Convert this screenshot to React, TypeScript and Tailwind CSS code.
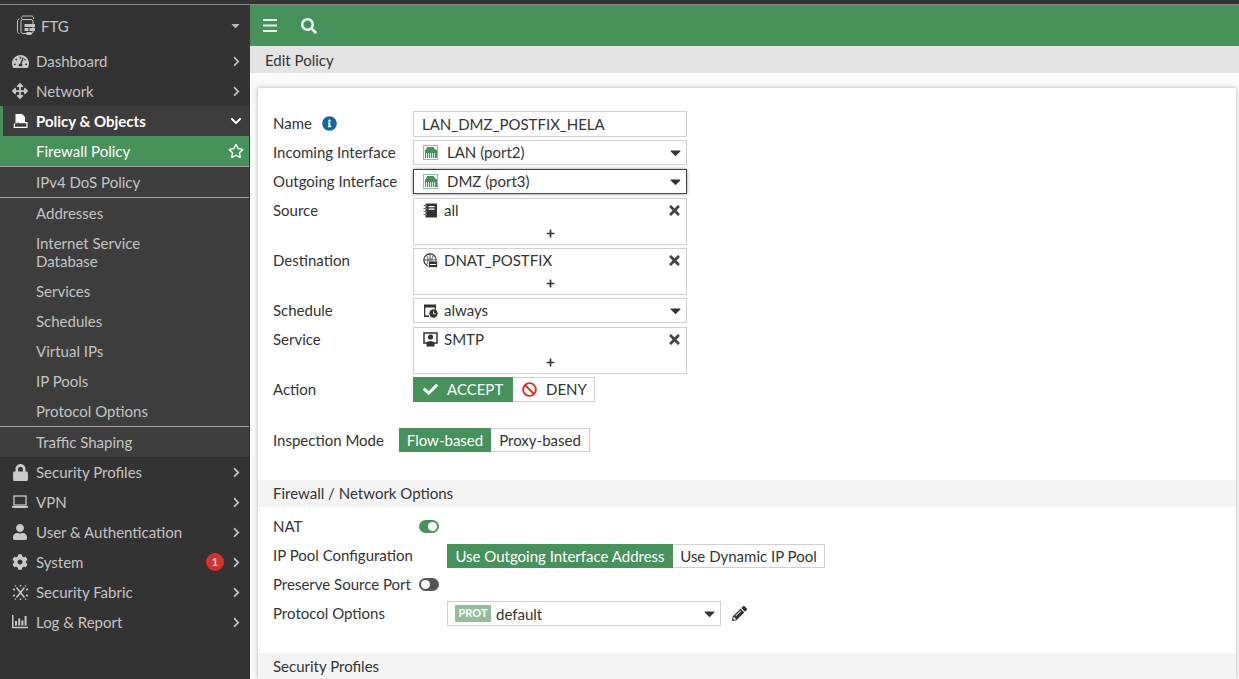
import React from "react";
import { FaTachometerAlt, FaArrowsAlt, FaLock, FaUser, FaCog, FaChevronRight, FaChevronDown, FaRegStar, FaCheck, FaBan, FaTimes, FaPlus, FaPencilAlt, FaInfoCircle, FaSearch, FaCaretDown } from "react-icons/fa";

const PolicyIcon = () => (
  <svg width="15" height="15" viewBox="0 0 15 15" fill="currentColor">
    <path d="M2.500 0h6.500l3 3v5H2.500z" />
    <path d="M6 8h8.500v1.200H6z" />
    <path d="M2.500 8.200h3v1H2v3.600h11.500V14H0.700v-3.500z" />
    <path d="M13.300 9h1.200v5h-1.200z" />
  </svg>
);
const FabricIcon = () => (
  <svg width="17" height="17" viewBox="0 0 17 17" stroke="currentColor" strokeWidth="1.500" fill="none">
    <path d="M4.500 3.500l8 10M12.500 3.500l-8 10" />
    <path d="M1 5l2 1M1 12l2-1M16 5l-2 1M16 12l-2-1M3 1.500l.8.800M14 1.500l-.8.800M3 15.500l.8-.8M14 15.500l-.8-.8M8.500 1v1.500M8.500 14.500V16" />
  </svg>
);
const LogIcon = () => (
  <svg width="16" height="14" viewBox="0 0 16 14" fill="currentColor">
    <path d="M0 0h1.500v11.800H16V13.300H0z" />
    <path d="M3 6h2v4.500H3zM6.200 3.500h2v7h-2zM9.400 5.500h2v5h-2zM12.600 1h2v9.500h-2z" />
  </svg>
);
const LaptopIcon = () => (
  <svg width="16" height="14" viewBox="0 0 16 14">
    <rect x="2" y="1" width="12" height="9" fill="none" stroke="currentColor" strokeWidth="1.300" />
    <path d="M0 11h16v1.200l-1 .8H1l-1-.8z" fill="currentColor" />
  </svg>
);
const FtgIcon = () => (
  <svg width="21" height="21" viewBox="0 0 20 21" fill="none" stroke="currentColor" strokeWidth="1">
    <path d="M3 18.500c-1.200 0-2-.8-2-2V6c0-1.200.8-2 2-2" />
    <path d="M5 4V3c0-1.200.8-2 2-2h8c1.200 0 2 .8 2 2v1" />
    <rect x="4.500" y="4.500" width="12" height="14" rx="2" />
    <path d="M8 9h10.500v3H8zM8 13h4v3H8zM13 13h5.500v3H13zM10 17h5v3h-5z" fill="currentColor" stroke="none" />
  </svg>
);
const PortIcon = () => (
  <svg width="15" height="15" viewBox="0 0 15 15" className="shrink-0">
    <rect x="0.500" y="0.500" width="14" height="14" fill="#fff" stroke="#8fbf9b" strokeWidth="1" />
    <path d="M4 2h7v1.500h1.500V5H14v8H2V5h1V3.500h1z" fill="#47915b" />
    <path d="M3.500 8v5M5.500 8v5M7.500 8v5M9.500 8v5M11.500 8v5" stroke="#fff" strokeWidth="0.800" />
  </svg>
);
const AddrIcon = () => (
  <svg width="15" height="15" viewBox="0 0 15 15" className="shrink-0" fill="#333">
    <path d="M2.500 0.500h11.500v14H2.500z" />
    <path d="M5.500 3h6v1.200h-6zM5.500 5.500h6v1.200h-6z" fill="#fff" />
    <path d="M0.500 2h3v1h-3zM0.500 5h3v1h-3zM0.500 8h3v1h-3zM0.500 11h3v1h-3z" stroke="#fff" strokeWidth="0.300" />
  </svg>
);
const VipIcon = () => (
  <svg width="15" height="15" viewBox="0 0 15 15" className="shrink-0">
    <circle cx="7" cy="7" r="6.200" fill="none" stroke="#333" strokeWidth="1.200" />
    <path d="M1 7h12M7 1v8M3.500 2.500c2 2 2 7 0 9M10.500 2.500c-2 2-2 5-1 6" fill="none" stroke="#333" strokeWidth="0.900" />
    <rect x="5.500" y="8" width="9" height="6.500" rx="1" fill="#333" stroke="#fff" strokeWidth="0.700" />
    <path d="M7 11h6v1H7z" fill="#fff" />
  </svg>
);
const ScheduleIcon = () => (
  <svg width="15" height="15" viewBox="0 0 15 15" className="shrink-0">
    <path d="M1 1.500h12v5h-1.300V4.500H2.300v8H6V14H1z" fill="#333" />
    <circle cx="10.500" cy="10.500" r="4.200" fill="#333" />
    <path d="M10.500 8.300v2.500h2" stroke="#fff" strokeWidth="1" fill="none" />
  </svg>
);
const ServiceIcon = () => (
  <svg width="15" height="15" viewBox="0 0 15 15" className="shrink-0">
    <path d="M1 1h13v10H1z" fill="none" stroke="#333" strokeWidth="1.500" />
    <circle cx="7.500" cy="5" r="2.600" fill="#333" />
    <path d="M3.500 11.500c0-3.500 8-3.500 8 0V14.500h-8z" fill="#333" />
  </svg>
);

const Caret = () => <FaCaretDown size={17} className="text-[#333] shrink-0 -mr-[3px]" />;

type Item = { label: string; icon: React.ReactNode; badge?: boolean };

const TopItem = ({ label, icon, badge }: Item) => (
  <div className="h-[30px] flex items-center text-[#c4c4c4]">
    <span className="w-[36px] pl-[12px] flex items-center shrink-0 text-[#c9c9c9]">{icon}</span>
    <span className="flex-1 pt-[1px]">{label}</span>
    {badge && (
      <span className="w-[18px] h-[18px] rounded-full bg-[#d6322a] text-white text-[12px] flex items-center justify-center mr-[7px]">1</span>
    )}
    <FaChevronRight size={11} className="mr-[8px] text-[#c9c9c9]" />
  </div>
);

const SubItem = ({ label }: { label: string }) => (
  <div className="h-[30px] flex items-center pl-[36px] pt-[1px] text-[#c4c4c4]">{label}</div>
);

const Sidebar = () => (
  <aside className="w-[250px] shrink-0 bg-[#333333] h-full overflow-hidden text-[15px]">
    <div className="h-[41px] flex items-center pl-[16px] pr-[8px] text-[#c4c4c4]">
      <FtgIcon />
      <span className="ml-[4px] flex-1 pt-[1px]">FTG</span>
      <FaCaretDown size={13} className="text-[#bbb]" />
    </div>
    <div>
      <TopItem label="Dashboard" icon={<FaTachometerAlt size={17} />} />
      <TopItem label="Network" icon={<FaArrowsAlt size={16} />} />
    </div>
    <div className="w-[249px] bg-[#3d3d3d]">
      <div className="h-[30px] flex items-center border-l-[3px] border-[#47915b] text-white font-bold">
        <span className="w-[33px] pl-[10px] shrink-0 flex items-center"><PolicyIcon /></span>
        <span className="flex-1 pt-[1px]">Policy &amp; Objects</span>
        <FaChevronDown size={12} className="mr-[7px]" />
      </div>
      <div className="h-[31px] flex items-center pl-[36px] pr-[5px] bg-[#47915b] text-white border-b border-[#a5a5a5]">
        <span className="flex-1 pt-[1px]">Firewall Policy</span>
        <FaRegStar size={16} />
      </div>
      <div className="h-[31px] flex items-center pl-[36px] pt-[1px] text-[#c4c4c4] border-b border-[#a5a5a5]">IPv4 DoS Policy</div>
      <SubItem label="Addresses" />
      <div className="h-[48px] flex items-center pl-[36px] text-[#c4c4c4] leading-[18px]">
        <span>Internet Service<br />Database</span>
      </div>
      <SubItem label="Services" />
      <SubItem label="Schedules" />
      <SubItem label="Virtual IPs" />
      <SubItem label="IP Pools" />
      <div className="h-[31px] flex items-center pl-[36px] text-[#c4c4c4] border-b border-[#a5a5a5]">Protocol Options</div>
      <SubItem label="Traffic Shaping" />
    </div>
    <TopItem label="Security Profiles" icon={<FaLock size={17} />} />
    <TopItem label="VPN" icon={<LaptopIcon />} />
    <TopItem label="User & Authentication" icon={<FaUser size={16} />} />
    <TopItem label="System" icon={<FaCog size={16} />} badge />
    <TopItem label="Security Fabric" icon={<FabricIcon />} />
    <TopItem label="Log & Report" icon={<LogIcon />} />
  </aside>
);

const Label = ({ children, className = "" }: { children: React.ReactNode; className?: string }) => (
  <div className={"text-[#333] shrink-0 " + className}>{children}</div>
);

const SelectRow = ({ label, focused, mt, icon, text }: { label: string; focused?: boolean; mt: string; icon: React.ReactNode; text: string }) => (
  <div className={"flex items-center " + mt}>
    <Label className="w-[140px]">{label}</Label>
    <div className={"w-[274px] h-[25px] bg-white flex items-center pl-[9px] pr-[5px] text-[#333] " + (focused ? "border border-[#444] shadow-[0_0_3px_rgba(0,0,0,0.45)]" : "border border-[#d0d0d0]")}>
      {icon}
      <span className="ml-[9px] flex-1">{text}</span>
      <Caret />
    </div>
  </div>
);

const MultiRow = ({ label, mt, icon, text }: { label: string; mt: string; icon: React.ReactNode; text: string }) => (
  <div className={"flex items-start " + mt}>
    <Label className="w-[140px] pt-[1px]">{label}</Label>
    <div className="w-[274px] h-[47px] border border-[#d0d0d0] bg-white text-[#333] flex flex-col">
      <div className="h-[24px] flex items-center pl-[9px] pr-[4px] pb-[2px]">
        {icon}
        <span className="ml-[6px] flex-1">{text}</span>
        <FaTimes size={15} className="text-[#444]" />
      </div>
      <div className="flex-1 flex items-center justify-center pb-[1px]"><FaPlus size={9} className="text-[#333]" /></div>
    </div>
  </div>
);

const Toggle = ({ on }: { on: boolean }) => (
  <span className={"w-[20px] h-[13px] rounded-full flex items-center shrink-0 px-[2px] " + (on ? "bg-[#47915b] justify-end" : "bg-[#555] justify-start")}>
    <span className="w-[9px] h-[9px] rounded-full bg-white" />
  </span>
);

const Section = ({ children, className = "" }: { children: React.ReactNode; className?: string }) => (
  <div className={"bg-[#f4f4f4] h-[27px] pl-[15px] flex items-center text-[#333] " + className}>{children}</div>
);

const Form = () => (
  <div className="bg-white w-full h-full shadow-[0_0_4px_rgba(0,0,0,0.3)] text-[15px]">
    <div className="pl-[15px] pt-[23px]">
      <div className="flex items-center">
        <Label className="w-[140px] flex items-center -mt-[1px]">
          Name
          <FaInfoCircle size={15} className="ml-[10px] text-[#11689f]" />
        </Label>
        <div className="w-[274px] h-[26px] border border-[#d0d0d0] flex items-center pl-[8px] text-[#333]">LAN_DMZ_POSTFIX_HELA</div>
      </div>
      <SelectRow label="Incoming Interface" mt="mt-[3px]" icon={<PortIcon />} text="LAN (port2)" />
      <SelectRow label="Outgoing Interface" mt="mt-[4px]" focused icon={<PortIcon />} text="DMZ (port3)" />
      <MultiRow label="Source" mt="mt-[4px]" icon={<AddrIcon />} text="all" />
      <MultiRow label="Destination" mt="mt-[3px]" icon={<VipIcon />} text="DNAT_POSTFIX" />
      <div className="flex items-center mt-[3px]">
        <Label className="w-[140px]">Schedule</Label>
        <div className="w-[274px] h-[25px] border border-[#d0d0d0] flex items-center pl-[9px] pr-[5px] text-[#333]">
          <ScheduleIcon />
          <span className="ml-[6px] flex-1">always</span>
          <Caret />
        </div>
      </div>
      <MultiRow label="Service" mt="mt-[4px]" icon={<ServiceIcon />} text="SMTP" />
      <div className="flex items-center mt-[3px]">
        <Label className="w-[140px]">Action</Label>
        <div className="h-[25px] w-[100px] bg-[#47915b] text-white flex items-center pl-[10px]">
          <FaCheck size={15} />
          <span className="ml-[9px]">ACCEPT</span>
        </div>
        <div className="h-[25px] w-[82px] border border-l-0 border-[#d0d0d0] text-[#333] flex items-center pl-[9px]">
          <FaBan size={15} className="text-[#d6322a]" />
          <span className="ml-[9px]">DENY</span>
        </div>
      </div>
      <div className="flex items-center mt-[26px]">
        <Label className="w-[126px]">Inspection Mode</Label>
        <div className="h-[24px] w-[92px] bg-[#47915b] text-white flex items-center justify-center">Flow-based</div>
        <div className="h-[24px] w-[99px] border border-l-0 border-[#d0d0d0] text-[#333] flex items-center justify-center">Proxy-based</div>
      </div>
    </div>
    <Section className="mt-[28px]">Firewall / Network Options</Section>
    <div className="pl-[15px] pt-[9px]">
      <div className="flex items-center h-[20px]">
        <Label className="w-[146px]">NAT</Label>
        <Toggle on />
      </div>
      <div className="flex items-center mt-[8px]">
        <Label className="w-[174px] -mt-[1px]">IP Pool Configuration</Label>
        <div className="h-[24px] w-[226px] bg-[#47915b] text-white flex items-center justify-center whitespace-nowrap">Use Outgoing Interface Address</div>
        <div className="h-[24px] w-[152px] border border-l-0 border-[#d0d0d0] text-[#333] flex items-center justify-center whitespace-nowrap">Use Dynamic IP Pool</div>
      </div>
      <div className="flex items-center h-[20px] mt-[6px]">
        <Label className="w-[146px]">Preserve Source Port</Label>
        <Toggle on={false} />
      </div>
      <div className="flex items-center mt-[7px]">
        <Label className="w-[174px] -mt-[1px]">Protocol Options</Label>
        <div className="w-[274px] h-[25px] border border-[#d0d0d0] flex items-center pl-[7px] pr-[5px] text-[#333]">
          <span className="bg-[#93bd9d] text-white text-[11px] font-bold w-[36px] h-[17px] flex items-center justify-center">PROT</span>
          <span className="ml-[5px] flex-1 pt-[1px]">default</span>
          <Caret />
        </div>
        <FaPencilAlt size={15} className="ml-[11px] text-[#333]" />
      </div>
    </div>
    <Section className="mt-[27px]">Security Profiles</Section>
  </div>
);

export default function App() {
  return (
    <div className="w-[1239px] h-[679px] overflow-hidden flex flex-col bg-[#f9f9f9]" style={{ fontFamily: "Lato, sans-serif" }}>
      <div className="h-[5px] shrink-0 bg-[#333] border-b border-[#8a8a8a]" />
      <div className="flex-1 flex min-h-0">
        <Sidebar />
        <main className="flex-1 flex flex-col min-w-0">
          <div className="h-[41px] shrink-0 bg-[#47915b] flex items-center pl-[13px] text-[#e8f3ea]">
            <svg width="14" height="13" viewBox="0 0 14 13" fill="currentColor"><path d="M0 0h14v2H0zM0 5.500h14v2H0zM0 11h14v2H0z" /></svg>
            <FaSearch size={16} className="ml-[24px]" />
          </div>
          <div className="h-[27px] shrink-0 bg-[#e4e4e4] flex items-center pl-[15px] pt-[1px] text-[#333] text-[15px]">Edit Policy</div>
          <div className="flex-1 min-h-0 pt-[15px] pl-[8px] pr-[3px]">
            <Form />
          </div>
        </main>
      </div>
    </div>
  );
}
